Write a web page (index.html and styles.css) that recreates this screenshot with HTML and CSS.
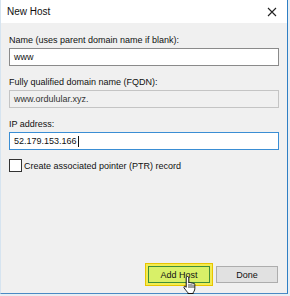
FILE: index.html
```html
<!DOCTYPE html>
<html>
<head>
    <title>New Host</title>
    <link rel="stylesheet" href="styles.css">
</head>
<body>
    <div class="window">
        <div class="titlebar">
            <span class="title">New Host</span>
            <svg class="close" width="10" height="10" viewBox="0 0 10 10">
                <path d="M1 1 L9 9 M9 1 L1 9" stroke="#222" stroke-width="1.1" fill="none"/>
            </svg>
        </div>
        <div class="content">
            <label class="label first">Name (uses parent domain name if blank):</label>
            <div class="field">www</div>

            <label class="label">Fully qualified domain name (FQDN):</label>
            <div class="field readonly">www.ordulular.xyz.</div>

            <label class="label">IP address:</label>
            <div class="field focused">52.179.153.166<span class="caret"></span></div>

            <div class="check-row">
                <span class="checkbox"></span>
                <span>Create associated pointer (PTR) record</span>
            </div>

            <div class="buttons">
                <span class="highlight">
                    <button class="btn add">Add Host</button>
                </span>
                <button class="btn">Done</button>
            </div>
        </div>
        <svg class="cursor" width="14" height="18" viewBox="0 0 14 18">
            <path d="M4.5 0.5 C5.3 0.5 5.8 1 5.8 1.8 L5.8 7 L6 7 C6.2 6.3 7.8 6.3 8 7.2 C8.3 6.6 9.8 6.6 10 7.6 C10.4 7.1 11.8 7.2 11.8 8.4 L11.8 12.5 C11.8 14.5 10.8 15.5 10.3 16.5 L10.3 17.5 L4.8 17.5 L4.8 16.6 C3.8 15.6 2.6 13.8 1.2 12 C0.5 11 1.2 9.9 2.3 10.5 L3.2 11.3 L3.2 1.8 C3.2 1 3.7 0.5 4.5 0.5 Z" fill="#fff" stroke="#111" stroke-width="1"/>
            <path d="M6 8 L6 12 M8 8 L8 12 M10 8.5 L10 12" stroke="#111" stroke-width="0.8"/>
        </svg>
    </div>
</body>
</html>
```

FILE: styles.css
```css
body { margin: 0; background: #e9eef3; font-family: "Liberation Sans", Arial, sans-serif; font-size: 9px; color: #111; }
.window {
    position: relative;
    width: 286px;
    height: 293px;
    background: #f0f0f0;
    border-right: 1px solid #2f7fc4;
    border-bottom: 1px solid #4a8ac4;
    border-left: 1px solid #d6e4f0;
    box-sizing: content-box;
    display: flex;
    flex-direction: column;
}
.titlebar {
    height: 23px;
    background: #fff;
    display: flex;
    align-items: center;
    justify-content: space-between;
    padding: 0 8px 0 6px;
}
.title { font-size: 10px; color: #111; }
.close { display: block; margin-right: 2px; }
.content {
    flex: 1;
    display: flex;
    flex-direction: column;
    padding: 0 8px 7px 8px;
}
.label { display: block; height: 12px; line-height: 12px; margin: 10px 0 2px; }
.label.first { margin-top: 11px; }
.field {
    height: 16px;
    line-height: 16px;
    border: 1px solid #8a8a8a;
    background: #fff;
    padding: 0 4px;
    display: flex;
    align-items: center;
}
.field.readonly { background: #f0f0f0; border-color: #c4c4c4; color: #333; }
.field.focused { border-color: #3a8ed4; }
.caret { display: inline-block; width: 1px; height: 11px; background: #111; margin-left: 1px; }
.check-row { display: flex; align-items: center; gap: 2px; margin-top: 9px; }
.checkbox { width: 11px; height: 11px; border: 1px solid #333; background: #fff; }
.buttons { margin-top: auto; display: flex; justify-content: flex-end; align-items: center; gap: 3px; padding-right: 1px; }
.highlight {
    display: flex;
    border: 1px solid #e8c400;
    background: #f2ec50;
    padding: 2px;
}
.btn {
    width: 62px;
    height: 17px;
    font-family: inherit;
    font-size: 9px;
    color: #111;
    background: #e1e1e1;
    border: 1px solid #adadad;
    padding: 0;
}
.btn.add { background: #d8f068; border-color: #3f8d3a; }
.cursor { position: absolute; left: 182px; top: 276px; }
```
